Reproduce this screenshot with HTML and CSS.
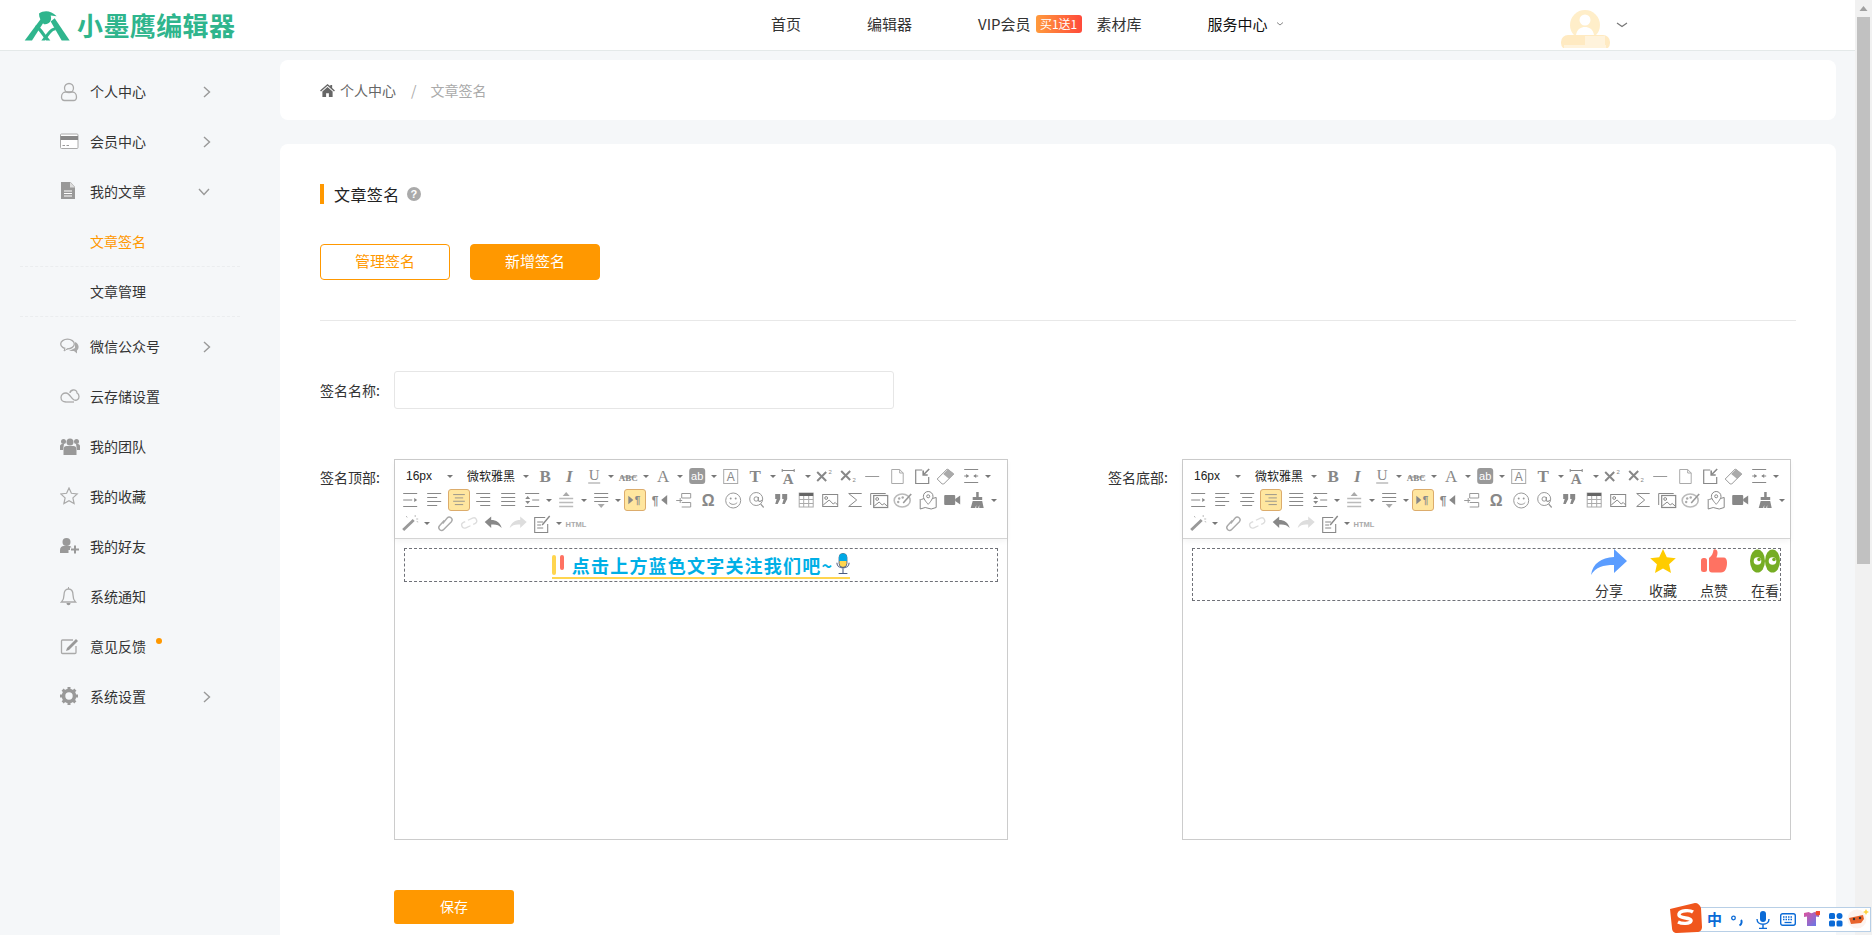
FILE: index.html
```html
<!DOCTYPE html>
<html lang="zh-CN">
<head>
<meta charset="utf-8">
<title>文章签名 - 小墨鹰编辑器</title>
<link rel="stylesheet" href="styles.css">
</head>
<body>
<svg class="sprite" width="0" height="0" aria-hidden="true">
<defs>
<symbol id="car" viewBox="0 0 10 24"><path d="M2 11h6l-3 3z" fill="#777"/></symbol>
<symbol id="b" viewBox="0 0 24 24"><text x="12" y="18" text-anchor="middle" class="tg tserif" font-weight="700" font-size="17">B</text></symbol>
<symbol id="i" viewBox="0 0 24 24"><text x="12" y="18" text-anchor="middle" class="tg tserif" font-style="italic" font-weight="700" font-size="17">I</text></symbol>
<symbol id="u" viewBox="0 0 24 24"><text x="12" y="16" text-anchor="middle" class="tg tserif" font-size="15">U</text><path d="M6 19h12" stroke="#999" stroke-width="1.2"/></symbol>
<symbol id="abc" viewBox="0 0 24 24"><text x="12" y="16.5" text-anchor="middle" class="tg tserif" font-weight="700" font-size="9">ABC</text><path d="M4 13h16" stroke="#888"/></symbol>
<symbol id="a" viewBox="0 0 24 24"><text x="12" y="18" text-anchor="middle" class="tg tserif" font-size="17">A</text></symbol>
<symbol id="ab" viewBox="0 0 24 24"><rect x="4" y="4" width="16" height="16" rx="3" fill="#999"/><text x="12" y="16" text-anchor="middle" fill="#fff" font-family="Liberation Sans" font-size="11">ab</text></symbol>
<symbol id="abox" viewBox="0 0 24 24"><rect x="4.500" y="5.500" width="14" height="14" fill="none" stroke="#aaa"/><text x="11.500" y="17" text-anchor="middle" class="tg tsans" font-size="12">A</text></symbol>
<symbol id="t" viewBox="0 0 24 24"><text x="11" y="18" text-anchor="middle" fill="#888" class="tserif" font-weight="700" font-size="17">T</text></symbol>
<symbol id="atop" viewBox="0 0 24 24"><path d="M4 6.500h12M4 5v3M16 5v3" stroke="#888"/><text x="10" y="20" text-anchor="middle" class="tg tserif" font-weight="700" font-size="15">A</text></symbol>
<symbol id="sup" viewBox="0 0 24 24"><path d="M4 8l9 9M13 8l-9 9" stroke="#888" stroke-width="2"/><text x="17" y="10" text-anchor="middle" class="tg tsans" font-size="6">2</text></symbol>
<symbol id="sub" viewBox="0 0 24 24"><path d="M4 7l9 9M13 7l-9 9" stroke="#888" stroke-width="2"/><text x="17" y="18" text-anchor="middle" class="tg tsans" font-size="6">2</text></symbol>
<symbol id="hr" viewBox="0 0 24 24"><path d="M4 12.500h14" stroke="#999"/></symbol>
<symbol id="page" viewBox="0 0 24 24"><path d="M5.500 5.500h8l3.500 3.500v10.500H5.500z" fill="none" stroke="#aaa"/><path d="M13.500 5.500v3.500h3.500" fill="none" stroke="#aaa"/></symbol>
<symbol id="expo" viewBox="0 0 24 24"><path d="M12 6H5.500v13.500h13V13" fill="none" stroke="#888" stroke-width="1.200"/><path d="M19 5l-5 5M13 6.500v4.500h4.500" fill="none" stroke="#888" stroke-width="1.600"/></symbol>
<symbol id="eraser" viewBox="0 0 24 24"><path d="M3 15L13 5l6.500 5-10 10H8z" fill="#fff" stroke="#999"/><path d="M9 10l6 5 5-5-6-5z" fill="#aaa"/></symbol>
<symbol id="ind" viewBox="0 0 24 24"><path d="M5 5.500h14M5 18.500h14M5 12h4M15 12h4" stroke="#888" fill="none"/><path d="M7 10l3 2-3 2zM17 10l-3 2 3 2z" fill="#888"/></symbol>
<symbol id="lindent" viewBox="0 0 24 24"><path d="M5 5.500h14M5 12h9M5 18.500h14" stroke="#888"/><path d="M16 10l3 2-3 2z" fill="#888"/></symbol>
<symbol id="al" viewBox="0 0 24 24"><path d="M5 5.500h14M5 9.500h10M5 13.500h14M5 17.500h10" stroke="#888"/></symbol>
<symbol id="ac" viewBox="0 0 24 24"><path d="M5 5.500h14M7 9.500h10M5 13.500h14M7 17.500h10" stroke="#888"/></symbol>
<symbol id="ar" viewBox="0 0 24 24"><path d="M5 5.500h14M9 9.500h10M5 13.500h14M9 17.500h10" stroke="#888"/></symbol>
<symbol id="aj" viewBox="0 0 24 24"><path d="M5 5.500h14M5 9.500h14M5 13.500h14M5 17.500h14" stroke="#888"/></symbol>
<symbol id="lh" viewBox="0 0 24 24"><path d="M5 5.500h14M5 18.500h14M12 12h7" stroke="#888"/><path d="M7.500 8l2.500 3H5zM7.500 16l2.500-3H5z" fill="#888"/></symbol>
<symbol id="rowb" viewBox="0 0 24 24"><path d="M12 4l3.500 4h-7z" fill="#aaa"/><path d="M5 10.500h14M5 14.500h14M5 18.500h14" stroke="#bbb" stroke-width="1.500"/></symbol>
<symbol id="rowa" viewBox="0 0 24 24"><path d="M5 5.500h14M5 9.500h14M5 13.500h14" stroke="#888"/><path d="M12 20l-3.500-4h7z" fill="#aaa"/></symbol>
<symbol id="ltr" viewBox="0 0 24 24"><path d="M4 7l6 5-6 5z" fill="#888"/><text x="15" y="17" text-anchor="middle" class="tg tsans" font-weight="700" font-size="12">¶</text></symbol>
<symbol id="rtl" viewBox="0 0 24 24"><text x="8" y="17" text-anchor="middle" class="tg tsans" font-weight="700" font-size="12">¶</text><path d="M20 7l-6 5 6 5z" fill="#888"/></symbol>
<symbol id="pb" viewBox="0 0 24 24"><path d="M9.500 5.500h9M9.500 5.500v4.500h9V5.500M9.500 14.500h9v4.500h-9M4 12.500h6M8 10v5" fill="none" stroke="#999"/></symbol>
<symbol id="omega" viewBox="0 0 24 24"><text x="12" y="17.500" text-anchor="middle" class="tg tsans" font-weight="700" font-size="16">Ω</text></symbol>
<symbol id="smile" viewBox="0 0 24 24"><circle cx="12" cy="12.500" r="7.500" fill="none" stroke="#999"/><circle cx="9.500" cy="10.500" r="1" fill="#999"/><circle cx="14.500" cy="10.500" r="1" fill="#999"/><path d="M8 14.500c2 2.500 6 2.500 8 0" fill="none" stroke="#999"/></symbol>
<symbol id="at" viewBox="0 0 24 24"><circle cx="11" cy="11" r="6.500" fill="none" stroke="#999"/><circle cx="11" cy="11" r="2.200" fill="none" stroke="#999"/><path d="M13.200 9v3.500c1 1.500 2.500 1 3.500-.5M15.500 16l3 3.500" fill="none" stroke="#999" stroke-width="1.200"/></symbol>
<symbol id="quote" viewBox="0 0 24 24"><path d="M6 6h5v5l-2.500 5H6l1.500-5H6zM13 6h5v5l-2.500 5H13l1.500-5H13z" fill="#888"/></symbol>
<symbol id="table" viewBox="0 0 24 24"><rect x="5" y="5" width="14" height="14" fill="#fff" stroke="#aaa"/><path d="M5 5h14v3H5z" fill="#666"/><path d="M5 11.500h14M5 15.500h14M9.500 8v11M14.500 8v11" stroke="#aaa"/></symbol>
<symbol id="img" viewBox="0 0 24 24"><rect x="4.500" y="6.500" width="15" height="12" fill="none" stroke="#888"/><circle cx="8" cy="10" r="1.400" fill="none" stroke="#888"/><path d="M5 17l6-5 4 4 2-1.500 2.500 2.500" fill="none" stroke="#888"/></symbol>
<symbol id="sigma" viewBox="0 0 24 24"><path d="M5.500 5.500h13M5.500 5.500l8 6.500-8 6.500h13" fill="none" stroke="#888"/></symbol>
<symbol id="imgs" viewBox="0 0 24 24"><rect x="6.500" y="7.500" width="14" height="12" fill="none" stroke="#888" stroke-width="1.200"/><path d="M3.500 17V5.500h15" fill="none" stroke="#888"/><circle cx="10" cy="11" r="1.400" fill="none" stroke="#888"/><path d="M7 18l5-4 3 3 2-1.500 3 2.500" fill="none" stroke="#888"/></symbol>
<symbol id="palette" viewBox="0 0 24 24"><ellipse cx="11" cy="12.500" rx="8" ry="6.500" fill="none" stroke="#bbb" stroke-width="1.600"/><circle cx="8" cy="10.500" r="1.200" fill="#aaa"/><circle cx="11.500" cy="9.500" r="1.200" fill="#aaa"/><circle cx="7" cy="14" r="1.200" fill="#aaa"/><path d="M12 15l8-9" stroke="#999" stroke-width="1.600"/></symbol>
<symbol id="map" viewBox="0 0 24 24"><path d="M5 11.500l3-1M16 10.500l4-1v10l-5 1.500-6-1.500-5 1.500v-10" fill="none" stroke="#888"/><path d="M12 3.500a4.800 4.800 0 0 1 4.800 4.800c0 3-4.800 8-4.800 8s-4.800-5-4.800-8A4.800 4.800 0 0 1 12 3.500z" fill="#fff" stroke="#888"/><circle cx="12" cy="8.300" r="1.500" fill="none" stroke="#888"/></symbol>
<symbol id="video" viewBox="0 0 24 24"><rect x="4" y="7" width="11" height="10" rx="1" fill="#888"/><path d="M15 11l5-3.500v9l-5-3.500z" fill="#888"/></symbol>
<symbol id="broom" viewBox="0 0 24 24"><path d="M11 4h2.500v5H17v3H7.500V9H11z" fill="#888"/><path d="M7.500 13H17l1.500 7H14v-3l-1 3h-2v-3l-1 3H5.500z" fill="#888"/></symbol>
<symbol id="wand" viewBox="0 0 24 24"><path d="M6 20l-2-2L14.500 8l2 2z" fill="#999"/><path d="M17 4v2M20 8h-2M8 5l1 1.500M20 11l-1.500-.5" stroke="#bbb"/></symbol>
<symbol id="link" viewBox="0 0 24 24"><path d="M10.500 12.500L15 7a2.800 2.800 0 0 1 4.200 3.700L11.500 18.500a2.800 2.800 0 0 1-4.200-3.700L12 9.500" fill="none" stroke="#aaa" stroke-width="1.400"/></symbol>
<symbol id="unlink" viewBox="0 0 24 24"><path d="M12 9h5a3 3 0 0 1 0 6h-2M12 15H7a3 3 0 0 1 0-6h2" transform="rotate(-25 12 12)" fill="none" stroke="#ddd" stroke-width="1.300"/></symbol>
<symbol id="undo" viewBox="0 0 24 24"><path d="M3.500 11L10 5.500v3.500c5 0 9 2.500 10.500 8-2.500-3-6-4-10.500-3.500V17z" fill="#888"/></symbol>
<symbol id="redo" viewBox="0 0 24 24"><path d="M20.500 11L14 5.500v3.500c-5 0-9 2.500-10.500 8 2.500-3 6-4 10.500-3.500V17z" fill="#ddd"/></symbol>
<symbol id="edit" viewBox="0 0 24 24"><path d="M15 6.500H4.500v15h13V13" fill="none" stroke="#888" stroke-width="1.100"/><path d="M7 11h6M7 14h4M7 17h6" stroke="#888"/><path d="M12 14l7.500-9" stroke="#888" stroke-width="1.400"/></symbol>
<symbol id="html" viewBox="0 0 30 24"><text x="15" y="15.500" text-anchor="middle" fill="#aaa" font-family="Liberation Sans" font-weight="700" font-size="7.500">HTML</text></symbol>
<symbol id="chev" viewBox="0 0 10 14"><path d="M2 2l5.500 5L2 12" fill="none" stroke="#999" stroke-width="1.400"/></symbol>
</defs>
</svg>

<div class="app">
  <div class="page">
    <header class="topbar">
      <div class="logo">
        <svg class="logo-mark" viewBox="70 28 138 92"><g fill="#2fb58d"><path d="M72 119l50-67 10 8-38 59z"/><path d="M150 62l12-10 45 67h-24z"/><path d="M105 74c10 0 18 10 30 28l14 17h-13l-18-24c-6-8-10-12-15-12z"/><path d="M165 80c-12 0-18 6-30 22l-13 17h11l16-20c6-8 11-11 16-11z"/><path d="M115 38c15-10 35-10 53 8l-18-2c5 16-5 28-20 26-10-10-15-20-15-32z"/></g></svg>
        <span class="logo-text">小墨鹰编辑器</span>
      </div>
      <nav class="nav">
        <a class="nav-link nav-home">首页</a>
        <a class="nav-link nav-editor">编辑器</a>
        <a class="nav-link nav-vip">VIP会员<span class="badge">买1送1</span></a>
        <a class="nav-link nav-lib">素材库</a>
        <a class="nav-link nav-service">服务中心<svg class="nav-caret" viewBox="0 0 8 6"><path d="M1 1.500l3 2.500 3-2.500" fill="none" stroke="#888"/></svg></a>
      </nav>
      <div class="user">
        <svg class="avatar" viewBox="0 0 52 42"><circle cx="25" cy="19" r="15" fill="#ffeec9"/><circle cx="25" cy="14" r="5.500" fill="#fff"/><path d="M16 29c1-6 5-8 9-8s8 2 9 8z" fill="#fff"/><rect x="1" y="29" width="49" height="15" rx="7" fill="#ffeac2"/><rect x="25" y="30" width="20" height="10" fill="#fff3dc"/><rect x="4" y="39" width="42" height="4" fill="#fff3dc"/><rect x="18" y="42" width="5" height="1" fill="#f5a623"/></svg>
        <svg class="user-caret" viewBox="0 0 12 8"><path d="M1 2l5 3.500L11 2" fill="none" stroke="#777" stroke-width="1.200"/></svg>
      </div>
    </header>

    <div class="body">
      <aside class="side">
        <a class="menu"><svg class="mi" viewBox="0 0 20 20"><circle cx="9" cy="6" r="4.500" fill="none" stroke="#aaa" stroke-width="1.300"/><path d="M1.500 15c0-3 2-5 4-5h7c2 0 4 2 4 5 0 2-1 3.500-3 3.500H4.500c-2 0-3-1.500-3-3.500z" fill="none" stroke="#aaa" stroke-width="1.300"/></svg><span class="ml">个人中心</span><svg class="chev"><use href="#chev"/></svg></a>
        <a class="menu"><svg class="mi" viewBox="0 0 20 20"><rect x="0.500" y="2" width="17.500" height="14.500" rx="1" fill="#fff" stroke="#aaa"/><rect x="0.500" y="4" width="17.500" height="4" fill="#888"/><path d="M2.500 13.500h2.500M6.500 13.500h2.500" stroke="#999"/></svg><span class="ml">会员中心</span><svg class="chev"><use href="#chev"/></svg></a>
        <a class="menu"><svg class="mi" viewBox="0 0 20 20"><path d="M1 0h9.500l4.500 5v12H1z" fill="#999"/><path d="M4 9h8M4 11.500h8M4 14h8" stroke="#fff"/><path d="M10 0v5.500h5" fill="#ddd"/></svg><span class="ml">我的文章</span><svg class="chev chev-d"><use href="#chev"/></svg></a>
        <div class="submenu">
          <a class="sub-item on">文章签名</a>
          <a class="sub-item">文章管理</a>
        </div>
        <a class="menu"><svg class="mi" viewBox="0 0 20 20"><ellipse cx="7.500" cy="7" rx="6.800" ry="4.800" fill="none" stroke="#aaa" stroke-width="1.300"/><path d="M5 11l-1 3 4-2.500" fill="#fff" stroke="#aaa"/><path d="M15 5c3 1 4 4 3.500 6-.3 1-1 2-1.500 2.500v3l-3-2.500H9l6-3z" fill="#aaa"/></svg><span class="ml">微信公众号</span><svg class="chev"><use href="#chev"/></svg></a>
        <a class="menu"><svg class="mi" viewBox="0 0 20 20"><path d="M6 15c-3 0-5-2-5-4.500S3 6 6 6c3.500 0 5 5.500 8 7 3 1 5-1 5-3.500 0-2-1-3-2-3.500 0-2-2-3.500-4-3-2 .500-3 2-3 3" fill="none" stroke="#aaa" stroke-width="1.300"/><path d="M6 15h8" stroke="#aaa" stroke-width="1.300"/></svg><span class="ml">云存储设置</span></a>
        <a class="menu"><svg class="mi" viewBox="0 0 20 20"><circle cx="10" cy="5" r="3.500" fill="#999"/><circle cx="3.500" cy="4.500" r="2.500" fill="#999"/><circle cx="16.500" cy="4.500" r="2.500" fill="#999"/><path d="M0 13V9c0-1 1-2 2-2h2L3 13z" fill="#999"/><path d="M20 13V9c0-1-1-2-2-2h-2l1 6z" fill="#999"/><path d="M3.500 18v-6c0-2 1.500-3 3-3h7c1.500 0 3 1 3 3v6z" fill="#999"/></svg><span class="ml">我的团队</span></a>
        <a class="menu"><svg class="mi" viewBox="0 0 20 20"><path d="M9 1l2.400 5.300 5.800.7-4.300 3.900 1.200 5.700L9 13.700l-5.100 2.900 1.200-5.700L.8 7l5.800-.7z" fill="none" stroke="#aaa" stroke-width="1.200"/></svg><span class="ml">我的收藏</span></a>
        <a class="menu"><svg class="mi" viewBox="0 0 20 20"><circle cx="6.500" cy="5" r="4" fill="#999"/><path d="M0 16v-3c0-2.500 2-4 3.500-4h6c1 0 1.500.5 2 1.500H10v2.500H8.500V16z" fill="#999"/><path d="M15 8.500v8M11 12.500h8" stroke="#999" stroke-width="2"/></svg><span class="ml">我的好友</span></a>
        <a class="menu"><svg class="mi" viewBox="0 0 20 20"><path d="M1.500 15c2-2 2.500-4 2.500-7 0-4 2-6 4.500-6S13 4 13 8c0 3 .5 5 2.500 7z" fill="none" stroke="#aaa" stroke-width="1.300"/><path d="M6.500 16c0 3 4 3 4 0z" fill="#999"/><path d="M8.500 0v2" stroke="#aaa"/></svg><span class="ml">系统通知</span></a>
        <a class="menu"><svg class="mi" viewBox="0 0 20 20"><path d="M13 3H2.500a1 1 0 0 0-1 1v11.500a1 1 0 0 0 1 1H15a1 1 0 0 0 1-1V9" fill="none" stroke="#aaa" stroke-width="1.300"/><path d="M7 11l9-9 2 2-9 9-3 1z" fill="#999"/></svg><span class="ml ml-dot">意见反馈</span></a>
        <a class="menu"><svg class="mi" viewBox="0 0 20 20"><circle cx="9" cy="9" r="5.500" fill="none" stroke="#999" stroke-width="3.600"/><path d="M9 0v18M0 9h18M2.600 2.600l12.800 12.800M15.400 2.600L2.600 15.400" stroke="#999" stroke-width="3" stroke-dasharray="3 12 3 20"/></svg><span class="ml">系统设置</span><svg class="chev"><use href="#chev"/></svg></a>
      </aside>

      <main class="content">
        <div class="crumbs">
          <svg class="home" viewBox="0 0 16 14"><path d="M8 0l3 2.500V1h2v3.200L16 7l-1 1-7-6-7 6-1-1z" fill="#666"/><path d="M2.500 8L8 3.300 13.500 8v6h-4V10h-3v4h-4z" fill="#666"/></svg>
          <a class="crumb">个人中心</a>
          <span class="crumb-sep">/</span>
          <span class="crumb-now">文章签名</span>
        </div>
        <section class="card">
          <h1 class="title">文章签名<svg class="help" viewBox="0 0 14 14"><circle cx="7" cy="7" r="7" fill="#aaa"/><text x="7" y="11" text-anchor="middle" fill="#fff" font-family="Liberation Sans" font-weight="700" font-size="11">?</text></svg></h1>
          <div class="tabs">
            <a class="btn btn-line">管理签名</a>
            <a class="btn btn-fill">新增签名</a>
          </div>
          <div class="rule"></div>
          <div class="row-name">
            <label class="lbl lbl-mid">签名名称:</label>
            <div class="input"></div>
          </div>
          <div class="row-ed">
            <div class="col col-a">
              <label class="lbl">签名顶部:</label>
              <div class="editor ed-a">
                <div class="toolbar">
                  <div class="tr">
                    <span class="sel sel-size">16px<svg class="c"><use href="#car"/></svg></span>
                    <span class="sel sel-font">微软雅黑<svg class="c"><use href="#car"/></svg></span>
                    <svg class="ic"><use href="#b"/></svg><svg class="ic"><use href="#i"/></svg><svg class="ic"><use href="#u"/></svg><svg class="c"><use href="#car"/></svg><svg class="ic"><use href="#abc"/></svg><svg class="c"><use href="#car"/></svg><svg class="ic"><use href="#a"/></svg><svg class="c"><use href="#car"/></svg><svg class="ic"><use href="#ab"/></svg><svg class="c"><use href="#car"/></svg><svg class="ic"><use href="#abox"/></svg><svg class="ic"><use href="#t"/></svg><svg class="c"><use href="#car"/></svg><svg class="ic"><use href="#atop"/></svg><svg class="c"><use href="#car"/></svg><svg class="ic"><use href="#sup"/></svg><svg class="ic"><use href="#sub"/></svg><svg class="ic"><use href="#hr"/></svg><svg class="ic"><use href="#page"/></svg><svg class="ic"><use href="#expo"/></svg><svg class="ic"><use href="#eraser"/></svg><svg class="ic"><use href="#ind"/></svg><svg class="c"><use href="#car"/></svg>
                  </div>
                  <div class="tr">
                    <svg class="ic"><use href="#lindent"/></svg><svg class="ic"><use href="#al"/></svg><svg class="ic act"><use href="#ac"/></svg><svg class="ic"><use href="#ar"/></svg><svg class="ic"><use href="#aj"/></svg><svg class="ic"><use href="#lh"/></svg><svg class="c"><use href="#car"/></svg><svg class="ic"><use href="#rowb"/></svg><svg class="c"><use href="#car"/></svg><svg class="ic"><use href="#rowa"/></svg><svg class="c"><use href="#car"/></svg><svg class="ic act"><use href="#ltr"/></svg><svg class="ic"><use href="#rtl"/></svg><svg class="ic"><use href="#pb"/></svg><svg class="ic"><use href="#omega"/></svg><svg class="ic"><use href="#smile"/></svg><svg class="ic"><use href="#at"/></svg><svg class="ic"><use href="#quote"/></svg><svg class="ic"><use href="#table"/></svg><svg class="ic"><use href="#img"/></svg><svg class="ic"><use href="#sigma"/></svg><svg class="ic"><use href="#imgs"/></svg><svg class="ic"><use href="#palette"/></svg><svg class="ic"><use href="#map"/></svg><svg class="ic"><use href="#video"/></svg><svg class="ic"><use href="#broom"/></svg><svg class="c"><use href="#car"/></svg>
                  </div>
                  <div class="tr tr-last">
                    <svg class="ic"><use href="#wand"/></svg><svg class="c"><use href="#car"/></svg><svg class="ic"><use href="#link"/></svg><svg class="ic"><use href="#unlink"/></svg><svg class="ic"><use href="#undo"/></svg><svg class="ic"><use href="#redo"/></svg><svg class="ic"><use href="#edit"/></svg><svg class="c"><use href="#car"/></svg><svg class="ic-html"><use href="#html"/></svg>
                  </div>
                </div>
                <div class="doc">
                  <div class="sig sig-top">
                    <div class="headline">
                      <span class="bars"><i class="bar-y"></i><i class="bar-r"></i></span>
                      <span class="head-text">点击上方蓝色文字关注我们吧~</span>
                      <svg class="mic" viewBox="0 0 16 24"><rect x="3.500" y="0.500" width="9" height="16" rx="4.500" fill="#ffd54f" stroke="#4a5a80"/><path d="M3.500 5a4.500 4.500 0 0 1 9 0v4h-9z" fill="#00a8e6"/><path d="M1 11c0 8 14 8 14 0M8 18v5M3 23.500h10" fill="none" stroke="#4a5a80" stroke-width="1.200"/></svg>
                    </div>
                  </div>
                </div>
              </div>
            </div>
            <div class="col col-b">
              <label class="lbl">签名底部:</label>
              <div class="editor ed-b">
                <div class="toolbar">
                  <div class="tr">
                    <span class="sel sel-size">16px<svg class="c"><use href="#car"/></svg></span>
                    <span class="sel sel-font">微软雅黑<svg class="c"><use href="#car"/></svg></span>
                    <svg class="ic"><use href="#b"/></svg><svg class="ic"><use href="#i"/></svg><svg class="ic"><use href="#u"/></svg><svg class="c"><use href="#car"/></svg><svg class="ic"><use href="#abc"/></svg><svg class="c"><use href="#car"/></svg><svg class="ic"><use href="#a"/></svg><svg class="c"><use href="#car"/></svg><svg class="ic"><use href="#ab"/></svg><svg class="c"><use href="#car"/></svg><svg class="ic"><use href="#abox"/></svg><svg class="ic"><use href="#t"/></svg><svg class="c"><use href="#car"/></svg><svg class="ic"><use href="#atop"/></svg><svg class="c"><use href="#car"/></svg><svg class="ic"><use href="#sup"/></svg><svg class="ic"><use href="#sub"/></svg><svg class="ic"><use href="#hr"/></svg><svg class="ic"><use href="#page"/></svg><svg class="ic"><use href="#expo"/></svg><svg class="ic"><use href="#eraser"/></svg><svg class="ic"><use href="#ind"/></svg><svg class="c"><use href="#car"/></svg>
                  </div>
                  <div class="tr">
                    <svg class="ic"><use href="#lindent"/></svg><svg class="ic"><use href="#al"/></svg><svg class="ic"><use href="#ac"/></svg><svg class="ic act"><use href="#ar"/></svg><svg class="ic"><use href="#aj"/></svg><svg class="ic"><use href="#lh"/></svg><svg class="c"><use href="#car"/></svg><svg class="ic"><use href="#rowb"/></svg><svg class="c"><use href="#car"/></svg><svg class="ic"><use href="#rowa"/></svg><svg class="c"><use href="#car"/></svg><svg class="ic act"><use href="#ltr"/></svg><svg class="ic"><use href="#rtl"/></svg><svg class="ic"><use href="#pb"/></svg><svg class="ic"><use href="#omega"/></svg><svg class="ic"><use href="#smile"/></svg><svg class="ic"><use href="#at"/></svg><svg class="ic"><use href="#quote"/></svg><svg class="ic"><use href="#table"/></svg><svg class="ic"><use href="#img"/></svg><svg class="ic"><use href="#sigma"/></svg><svg class="ic"><use href="#imgs"/></svg><svg class="ic"><use href="#palette"/></svg><svg class="ic"><use href="#map"/></svg><svg class="ic"><use href="#video"/></svg><svg class="ic"><use href="#broom"/></svg><svg class="c"><use href="#car"/></svg>
                  </div>
                  <div class="tr tr-last">
                    <svg class="ic"><use href="#wand"/></svg><svg class="c"><use href="#car"/></svg><svg class="ic"><use href="#link"/></svg><svg class="ic"><use href="#unlink"/></svg><svg class="ic"><use href="#undo"/></svg><svg class="ic"><use href="#redo"/></svg><svg class="ic"><use href="#edit"/></svg><svg class="c"><use href="#car"/></svg><svg class="ic-html"><use href="#html"/></svg>
                  </div>
                </div>
                <div class="doc">
                  <div class="sig sig-bottom">
                    <div class="act-item act-share"><svg class="act-ic" viewBox="0 0 36 26"><path d="M0 26C2 14 10 9 23 8V0l13 12-13 12v-8C12 16 5 18 0 26z" fill="#5b9dff"/></svg><span>分享</span></div>
                    <div class="act-item"><svg class="act-ic" viewBox="0 0 26 24"><path d="M13 0l3.800 8.200 9 1-6.700 6 1.900 8.800L13 19.500 5 24l1.900-8.800-6.700-6 9-1z" fill="#ffcc00"/></svg><span>收藏</span></div>
                    <div class="act-item"><svg class="act-ic" viewBox="0 0 26 24"><rect x="0" y="9" width="6" height="14" rx="2.500" fill="#ff7262"/><path d="M8 9c3-2 4-5 4.500-8 .2-1.500 4-1 4 2.500 0 2-.5 3.500-1 5h7c2.500 0 3.500 2 3.500 5 0 6-2 10-6 10H11c-2 0-3-1-3-3z" fill="#ff7262"/></svg><span>点赞</span></div>
                    <div class="act-item"><svg class="act-ic" viewBox="0 0 30 24"><ellipse cx="7.500" cy="12" rx="7.500" ry="11.500" fill="#76ad24"/><ellipse cx="22.500" cy="12" rx="7.500" ry="11.500" fill="#76ad24"/><circle cx="7.500" cy="12" r="3.800" fill="#fff"/><circle cx="22.500" cy="12" r="3.800" fill="#fff"/><circle cx="9" cy="10.500" r="1.800" fill="#76ad24"/><circle cx="24" cy="10.500" r="1.800" fill="#76ad24"/></svg><span>在看</span></div>
                  </div>
                </div>
              </div>
            </div>
          </div>
          <a class="btn-save">保存</a>
        </section>
      </main>
    </div>
  </div>
  <div class="scroll">
    <svg class="scroll-up" viewBox="0 0 17 17"><path d="M8.500 6l4 5h-8z" fill="#a0a0a0"/></svg>
    <div class="thumb"></div>
  </div>
</div>

<div class="ime">
  <svg class="ime-logo" viewBox="0 0 32 30"><path d="M0 6L25 0c3 0 5 2 6 5l1 19c0 3-2 5-5 5L7 30c-3 0-5-2-5-5z" fill="#f0561d"/><path d="M23 9c-3-2-13-2-14 2-1 5 13 3 12 7-1 3-9 3-13 1" fill="none" stroke="#fff" stroke-width="3.400"/></svg>
  <span class="ime-zh">中</span>
  <svg class="ime-i ime-punc" viewBox="0 0 14 14"><circle cx="3.500" cy="5" r="1.800" fill="none" stroke="#0a6ad6" stroke-width="1.300"/><path d="M11 7c1 1 1 4-1.500 5.500" fill="none" stroke="#0a6ad6" stroke-width="2"/></svg>
  <svg class="ime-i ime-mic" viewBox="0 0 14 18"><rect x="4" y="0" width="6" height="11" rx="3" fill="#0a6ad6"/><path d="M1 8c0 7 12 7 12 0M7 13v4M3 17.500h8" fill="none" stroke="#0a6ad6" stroke-width="1.400"/></svg>
  <svg class="ime-i ime-key" viewBox="0 0 16 13"><rect x="0.700" y="0.700" width="14.600" height="11.600" rx="2" fill="none" stroke="#0a6ad6" stroke-width="1.400"/><path d="M3 4h10M3 6.500h10" stroke="#0a6ad6" stroke-width="1.300" stroke-dasharray="1.500 1"/><path d="M4.500 9.500h7" stroke="#0a6ad6" stroke-width="1.300"/></svg>
  <svg class="ime-i ime-shirt" viewBox="0 0 16 16"><defs><linearGradient id="sh" x1="0" y1="0" x2="1" y2="1"><stop offset="0" stop-color="#e0529c"/><stop offset="1" stop-color="#5a7cf0"/></linearGradient></defs><path d="M0 2l5-1c1 1.500 4 1.500 5 0l5 1v4l-3-.5V15H3V5.500L0 6z" fill="url(#sh)"/><circle cx="14" cy="2" r="2.500" fill="#f0482d"/></svg>
  <svg class="ime-i ime-grid" viewBox="0 0 14 14"><rect width="6" height="6" rx="1.500" fill="#0a6ad6"/><rect x="7.500" width="6" height="6" rx="3" fill="#0a6ad6"/><rect y="7.500" width="6" height="6" rx="1.500" fill="#0a6ad6"/><rect x="7.500" y="7.500" width="6" height="6" rx="1.500" fill="#0a6ad6"/></svg>
  <svg class="ime-i ime-fox" viewBox="0 0 22 20"><circle cx="10" cy="10" r="9.500" fill="#fdf3ee"/><path d="M2 9l14-3 1 4-3 4-10 1z" fill="#e8622a"/><circle cx="7" cy="10" r="1.200" fill="#333"/><circle cx="13" cy="9" r="1.200" fill="#333"/><path d="M19 0l1 2 2 1-2 1-1 2-1-2-2-1 2-1z" fill="#ffd23f"/></svg>
</div>
</body>
</html>
```
FILE: styles.css
```css
* { box-sizing: border-box; }
html, body { margin: 0; height: 100%; overflow: hidden; }
body { font: 14px/1.4 "Noto Sans CJK SC", "Liberation Sans", sans-serif; color: #333; background: #f5f7f9; }
a { color: inherit; text-decoration: none; }
.sprite { position: absolute; }
.tg { fill: #888; }
.tserif { font-family: "Liberation Serif", serif; }
.tsans { font-family: "Liberation Sans", sans-serif; }

.app { display: flex; height: 935px; overflow: hidden; }
.page { flex: 1; min-width: 0; display: flex; flex-direction: column; }

.topbar { flex: none; height: 51px; background: #fff; border-bottom: 1px solid #e4e9e9; display: flex; align-items: center; padding-left: 24px; }
.logo { display: flex; align-items: center; width: 747px; }
.logo-mark { width: 46px; height: 31px; }
.logo-text { margin-left: 7px; font-size: 26px; line-height: 30px; font-weight: 700; color: #2fb58d; letter-spacing: .4px; }
.nav { display: flex; align-items: center; color: #333; font-size: 15px; margin-top: -3px; }
.nav-link { display: flex; align-items: center; white-space: nowrap; }
.nav-home { margin-left: 0; }
.nav-editor { margin-left: 66px; }
.nav-vip { margin-left: 66px; }
.badge { margin-left: 5px; width: 46px; height: 18px; border-radius: 3px; background: linear-gradient(90deg, #ff9a3c, #ff4a3a); color: #fff; font-size: 12px; line-height: 18px; text-align: center; }
.nav-lib { margin-left: 15px; }
.nav-service { margin-left: 66px; color: #111; }
.nav-caret { width: 8px; height: 6px; margin-left: 8px; }
.user { display: flex; align-items: center; margin-left: 276px; }
.avatar { width: 52px; height: 42px; margin-top: 4px; }
.user-caret { width: 12px; height: 8px; margin-left: 4px; }

.body { flex: 1; display: flex; min-height: 0; }
.side { flex: none; width: 280px; padding-top: 16px; }
.menu { display: flex; align-items: center; height: 50px; padding-left: 60px; color: #333; }
.mi { width: 20px; height: 20px; flex: none; }
.ml { margin-left: 10px; width: 112px; position: relative; }
.ml-dot::after { content: ""; position: absolute; left: 66px; top: 1px; width: 6px; height: 6px; border-radius: 50%; background: #ff9800; }
.chev { width: 10px; height: 14px; }
.chev-d { transform: rotate(90deg); margin-left: -3px; }
.submenu { padding-bottom: 5px; }
.sub-item { display: block; height: 50px; margin: 0 40px 0 20px; padding-left: 70px; line-height: 48px; border-bottom: 1px dashed #ebedef; }
.sub-item.on { color: #ff9800; }

.content { flex: 1; min-width: 0; padding-top: 9px; padding-right: 19px; }
.crumbs { height: 60px; background: #fff; border-radius: 8px; display: flex; align-items: center; padding-left: 40px; padding-top: 1px; }
.home { width: 15px; height: 13px; }
.crumb { margin-left: 5px; color: #666; }
.crumb-sep { margin: 0 14px 0 15px; color: #aaa; }
.crumb-now { color: #aaa; }
.card { margin-top: 24px; background: #fff; border-radius: 8px 8px 0 0; padding: 40px 40px 0; height: 800px; }
.title { margin: 0; height: 20px; display: flex; align-items: center; border-left: 4px solid #ff9800; padding-left: 10px; font-size: 16px; font-weight: 400; color: #222; letter-spacing: .4px; }
.help { width: 14px; height: 14px; margin-left: 7px; }
.tabs { display: flex; gap: 20px; margin-top: 40px; }
.btn { width: 130px; height: 36px; border-radius: 4px; text-align: center; line-height: 32px; font-size: 15px; border: 1px solid #ff9800; }
.btn-line { color: #ff9800; background: #fff; }
.btn-fill { color: #fff; background: #ff9800; }
.rule { margin-top: 40px; border-top: 1px solid #e8e8e8; }
.row-name { display: flex; align-items: center; margin-top: 50px; }
.lbl { flex: none; width: 74px; color: #333; white-space: nowrap; line-height: 20px; }
.lbl-mid { line-height: 20px; }
.input { width: 500px; height: 38px; border: 1px solid #e6e6e6; border-radius: 3px; }
.row-ed { display: flex; margin-top: 50px; }
.col { display: flex; flex: none; }
.col-a { width: 788px; }
.col .lbl { padding-top: 8px; }
.editor { border: 1px solid #ccc; height: 381px; display: flex; flex-direction: column; }
.ed-a { width: 614px; }
.ed-b { width: 609px; }
.toolbar { height: 79px; flex: none; padding: 4px 0 0 3px; border-bottom: 1px solid #d4d4d4; box-shadow: 0 2px 6px rgba(0,0,0,.05); }
.tr { display: flex; align-items: center; height: 24px; }
.tr-last { margin-top: -1px; }
.ic { flex: none; width: 24.4px; height: 24px; display: block; }
.ic.act { background: #ffe69f; border: 1px solid #dcac6c; border-radius: 3px; width: 22px; height: 22px; margin: 0 1.200px; }
.c { flex: none; width: 10px; height: 24px; display: block; }
.ic-html { flex: none; width: 30px; height: 24px; margin-left: -3px; }
.sel { display: flex; align-items: center; flex: none; font-size: 12px; color: #222; height: 24px; }
.sel-size { width: 60px; padding-left: 8px; font-family: "Liberation Sans", sans-serif; font-size: 12px; }
.sel-size .c { margin-left: 13px; }
.sel-font { width: 75px; padding-left: 9px; }
.sel-font .c { margin-left: 6px; }

.doc { flex: 1; padding: 9px 9px 0; }
.sig { border: 1px dashed #6f7178; }
.sig-top { display: flex; justify-content: center; height: 34px; }
.headline { display: flex; align-items: flex-start; height: 32px; position: relative; border-bottom: 2px solid #ffd54f; margin-top: -2px; }
.bars { display: flex; gap: 4px; margin-top: 8px; margin-right: 8px; }
.bar-y, .bar-r { display: block; width: 4px; border-radius: 2px; }
.bar-y { height: 20px; background: #ffd54f; }
.bar-r { height: 15px; background: #ff7262; }
.head-text { font-size: 18px; line-height: 28px; font-weight: 700; color: #00afe6; letter-spacing: 1.2px; margin-top: 4px; white-space: nowrap; }
.mic { width: 14px; height: 23px; margin: 5px 0 0 3px; }
.sig-bottom { display: flex; justify-content: flex-end; height: 53px; gap: 21px; }
.act-item { width: 30px; display: flex; flex-direction: column; align-items: center; font-size: 14px; line-height: 20px; color: #333; white-space: nowrap; }
.act-ic { height: 24px; width: 34px; margin-bottom: 7px; flex: none; }
.act-share { margin-right: 3px; }
.act-share .act-ic { width: 36px; height: 26px; margin-bottom: 5px; }

.btn-save { display: block; margin: 50px 0 0 74px; width: 120px; height: 34px; line-height: 32px; border-radius: 3px; background: #ff9800; color: #fff; text-align: center; }

.scroll { flex: none; width: 17px; background: #f1f1f1; position: relative; }
.scroll-up { display: block; width: 17px; height: 17px; }
.thumb { margin: 0 2px; height: 547px; background: #c1c1c1; }

.ime { position: fixed; right: 1px; bottom: 3px; width: 190px; height: 25px; background: #fff; border: 1px solid #b8cfe6; display: flex; align-items: center; }
.ime-logo { position: absolute; left: -12px; top: -5px; width: 32px; height: 30px; }
.ime-zh { position: absolute; left: 25px; top: 0; font-size: 15px; line-height: 22px; font-weight: 700; color: #0a6ad6; }
.ime-i { position: absolute; }
.ime-punc { left: 48px; top: 5px; width: 14px; height: 14px; }
.ime-mic { left: 74px; top: 3px; width: 14px; height: 18px; }
.ime-key { left: 98px; top: 5px; width: 16px; height: 13px; }
.ime-shirt { left: 122px; top: 3px; width: 16px; height: 16px; }
.ime-grid { left: 147px; top: 5px; width: 14px; height: 14px; }
.ime-fox { left: 165px; top: 1px; width: 22px; height: 20px; }
```
